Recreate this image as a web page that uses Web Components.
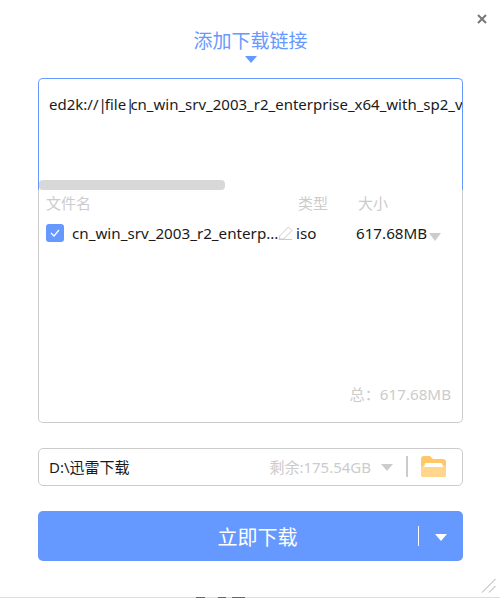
<!DOCTYPE html>
<html lang="zh">
<head>
<meta charset="utf-8">
<style>
  html,body{margin:0;height:100%;background:#fff}
  body{font-family:"Noto Sans","Noto Sans CJK SC",sans-serif;overflow:hidden}
</style>
</head>
<body>
<add-link-dialog></add-link-dialog>
<script>
// <link-input> — url box with its fake scrollbar
class LinkInput extends HTMLElement {
  connectedCallback() {
    this.attachShadow({ mode: "open" });
    this.shadowRoot.innerHTML = `
      <style>
        :host{display:block;height:112px;box-sizing:border-box;border:1px solid #6699ff;border-bottom:0;border-radius:5px 5px 0 0;position:relative;overflow:hidden}
        .url{padding:15px 0 0 10px;font-size:15px;line-height:21px;color:#1a1a1a;white-space:nowrap}
        .bar{position:absolute;left:0;bottom:0;width:186px;height:10px;border-radius:4px;background:#d8d8d8}
      </style>
      <div class="url"><slot></slot></div>
      <div class="bar"></div>`;
  }
}
customElements.define("link-input", LinkInput);

// <file-table> — list of files in the link
class FileTable extends HTMLElement {
  connectedCallback() {
    this.attachShadow({ mode: "open" });
    this.shadowRoot.innerHTML = `
      <style>
        :host{display:flex;flex-direction:column;height:233px;box-sizing:border-box;border:1px solid #ccc;border-top:0;border-radius:0 0 5px 5px;color:#1a1a1a;font-size:15.2px}
        .head,.row{display:grid;grid-template-columns:251px 61px 1fr;align-items:center}
        .head{height:25px;padding-left:7px;color:#ccc;font-size:15px}
        .head span:nth-child(2){margin-left:1px}
        .row{height:36px;padding-left:7px}
        .name{display:flex;align-items:center;min-width:0}
        .check{width:18px;height:18px;border-radius:3px;background:#6699ff;flex:none;display:flex;align-items:center;justify-content:center;margin-right:8px}
        .fn{white-space:nowrap;flex:none;width:205px}
        .pen{flex:none;margin-left:1px}
        .type{margin-left:-1px}
        .size{display:flex;align-items:center;margin-left:-2px}
        .tri{width:0;height:0;border:6.5px solid transparent;border-top:8px solid #ccc;border-bottom:0;margin:8px 0 0 2px}
        .total{margin-top:auto;padding:0 11px 18px 0;text-align:right;color:#ccc;font-size:15.2px}
      </style>
      <div class="head"><span>文件名</span><span>类型</span><span>大小</span></div>
      <div class="row">
        <div class="name">
          <span class="check"><svg width="12" height="10" viewBox="0 0 12 10"><path d="M2 5l3 3 5-6" fill="none" stroke="#fff" stroke-width="1.2"/></svg></span>
          <span class="fn">cn_win_srv_2003_r2_enterp...</span>
          <svg class="pen" width="15" height="15" viewBox="0 0 15 15"><path d="M1 13.5l1-4L10.5 1l3.5 3.5L5.5 13H1.5zM1 13.5h13" fill="none" stroke="#ccc"/></svg>
        </div>
        <span class="type">iso</span>
        <span class="size">617.68MB<i class="tri"></i></span>
      </div>
      <div class="total">总：617.68MB</div>`;
  }
}
customElements.define("file-table", FileTable);

// <save-path> — download folder and free space
class SavePath extends HTMLElement {
  connectedCallback() {
    this.attachShadow({ mode: "open" });
    this.shadowRoot.innerHTML = `
      <style>
        :host{display:flex;align-items:center;height:38px;box-sizing:border-box;border:1px solid #ccc;border-radius:5px;padding:0 16px 2px 10px;font-size:15px;color:#1a1a1a}
        .path{flex:1}
        .free{color:#ccc}
        .tri{width:0;height:0;border:6.5px solid transparent;border-top:7px solid #ccc;border-bottom:0;margin:3px 0 0 10px}
        .sep{width:2px;height:21px;background:#ccc;margin:0 13px 0 13px}
        svg{display:block}
      </style>
      <span class="path"><slot></slot></span>
      <span class="free">剩余:175.54GB</span>
      <i class="tri"></i>
      <i class="sep"></i>
      <svg width="25" height="21" viewBox="0 0 25 21"><path d="M0 3a3 3 0 0 1 3-3h6l3 3h10a3 3 0 0 1 3 3v12a3 3 0 0 1-3 3H3a3 3 0 0 1-3-3z" fill="#ffc766"/><path d="M0 12a3 3 0 0 1 3-3h19a3 3 0 0 1 3 3v6a3 3 0 0 1-3 3H3a3 3 0 0 1-3-3z" fill="#ffd68c"/><path d="M5 7h15a1 1 0 0 1 1 .7L22 11H3l1-3.300A1 1 0 0 1 5 7z" fill="#fff"/></svg>`;
  }
}
customElements.define("save-path", SavePath);

// <download-button> — primary action with a split arrow
class DownloadButton extends HTMLElement {
  connectedCallback() {
    this.attachShadow({ mode: "open" });
    this.shadowRoot.innerHTML = `
      <style>
        :host{display:flex;align-items:center;height:50px;border-radius:5px;background:#6699ff;color:#fff;font-size:20px;position:relative}
        .label{flex:1;text-align:center;padding-left:59px}
        .sep{width:1px;height:20px;background:#fff}
        .tri{width:0;height:0;border:6.5px solid transparent;border-top:7px solid #fff;border-bottom:0;margin:3px 16px 0 16px}
      </style>
      <span class="label"><slot></slot></span><i class="sep"></i><i class="tri"></i>`;
  }
}
customElements.define("download-button", DownloadButton);

// <add-link-dialog> — the whole window
class AddLinkDialog extends HTMLElement {
  connectedCallback() {
    this.attachShadow({ mode: "open" });
    this.shadowRoot.innerHTML = `
      <style>
        :host{display:block;height:598px;box-sizing:border-box;padding:0 37px 0 38px;position:relative;border-bottom:1px solid #ddd}
        .close{position:absolute;right:13px;top:14px}
        .grip{position:absolute;right:3px;bottom:3px}
        .peek{position:absolute;left:196px;bottom:-1px;display:flex}
        .peek i{height:1px;background:#666}
        h1{margin:0;padding-top:28px;height:50px;text-align:center;font-size:19px;font-weight:400;line-height:27px;color:#6699ff}
        .arrow{width:0;height:0;margin:-22px auto 0;border:6.5px solid transparent;border-top:7px solid #6699ff;border-bottom:0}
        .gap-top{height:15px}
        save-path{margin-top:25px}
        download-button{margin-top:25px}
      </style>
      <svg class="close" width="10" height="10" viewBox="0 0 10 10"><path d="M1 1l8 8M9 1l-8 8" stroke="#777" stroke-width="2"/></svg>
      <h1>添加下载链接</h1>
      <div class="arrow"></div>
      <div class="gap-top"></div>
      <link-input>ed2k://<span style="letter-spacing:-2px">|</span>file<span style="letter-spacing:-4px">|</span>cn_win_srv_2003_r2_enterprise_x64_with_sp2_v</link-input>
      <file-table></file-table>
      <save-path>D:\\迅雷下载</save-path>
      <download-button>立即下载</download-button>
      <svg class="grip" width="16" height="16" viewBox="0 0 16 16"><path d="M1 14.5L14.5 1M8 14.5l6.500-6.500" stroke="#aaa" stroke-width="1" fill="none"/></svg>
      <div class="peek"><i style="width:9px"></i><i style="width:8px;margin-left:13px"></i><i style="width:13px;margin-left:6px"></i></div>`;
  }
}
customElements.define("add-link-dialog", AddLinkDialog);
</script>
</body>
</html>
